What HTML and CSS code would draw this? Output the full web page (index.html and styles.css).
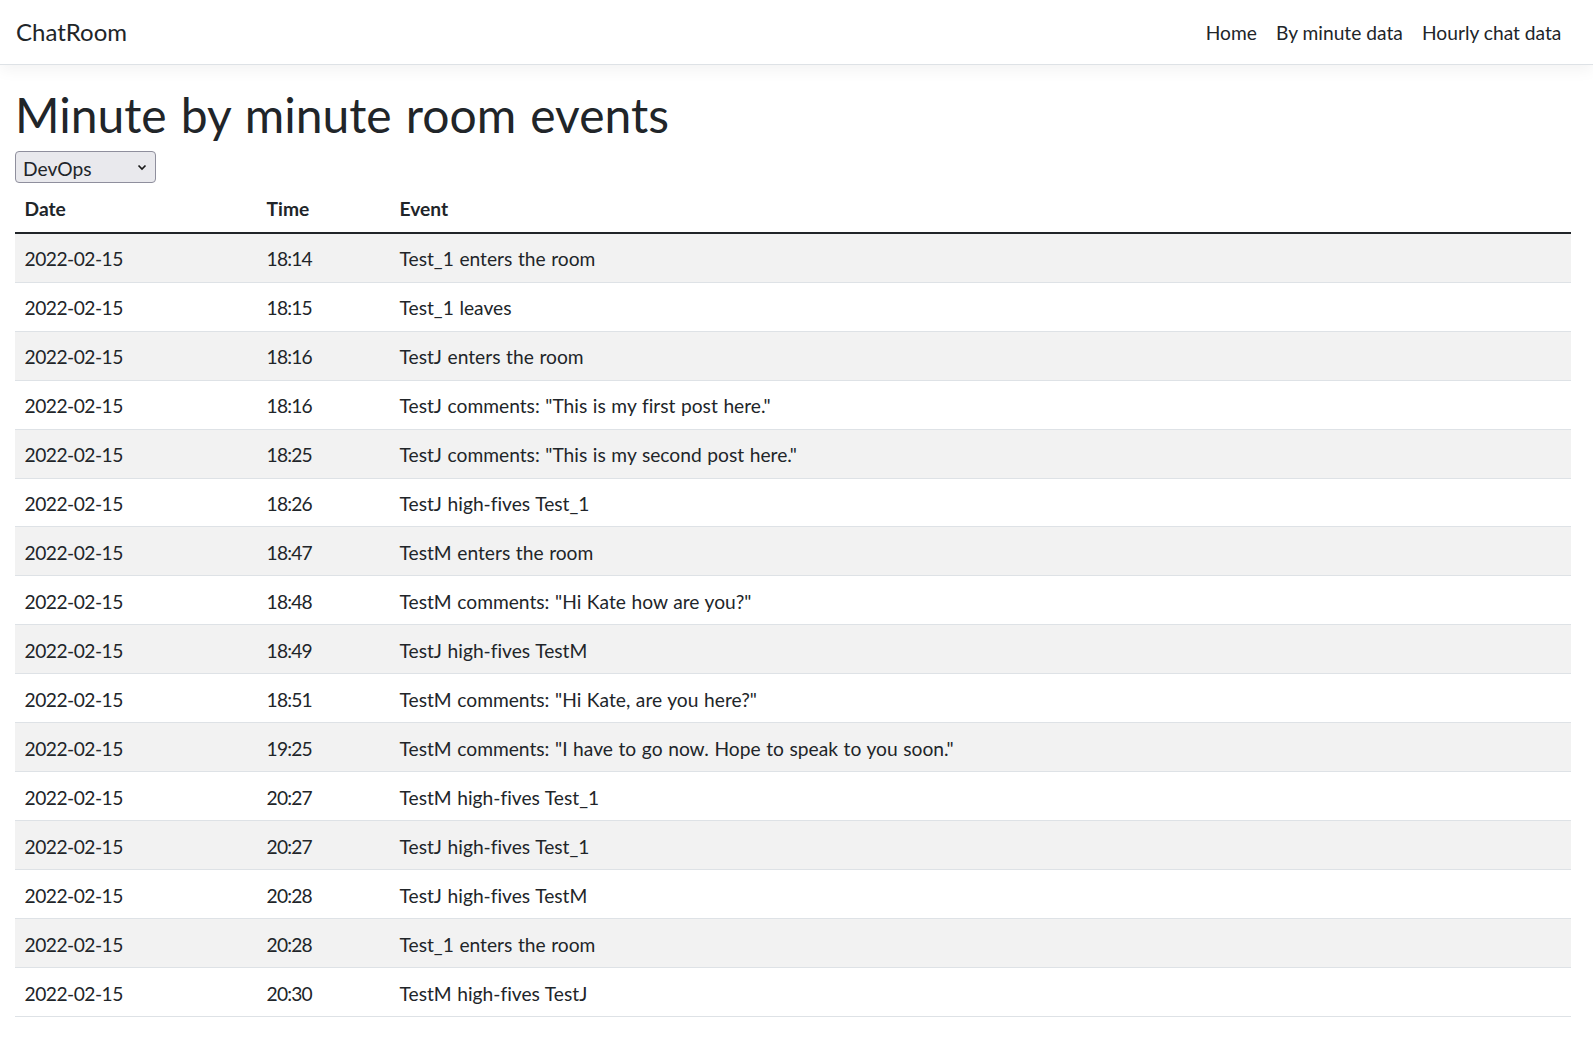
FILE: index.html
```html
<!DOCTYPE html>
<html lang="en">
<head>
<meta charset="utf-8">
<title>Minute by minute room events - ChatRoom</title>
<link rel="stylesheet" href="styles.css">
</head>
<body>
<header class="navbar">
  <a class="brand" href="#">ChatRoom</a>
  <nav class="nav">
    <a class="nav-link" href="#">Home</a>
    <a class="nav-link" href="#">By minute data</a>
    <a class="nav-link" href="#">Hourly chat data</a>
  </nav>
</header>
<main class="main">
  <h1 class="title">Minute by minute room events</h1>
  <div class="picker">
    <div class="select">
      <span class="select-value">DevOps</span>
      <svg class="chevron" width="10" height="7" viewBox="0 0 10 7"><path d="M1.5 1.5 L5 5 L8.5 1.5" fill="none" stroke="#1a1a1a" stroke-width="1.7"/></svg>
    </div>
  </div>
  <table class="events">
    <thead>
      <tr><th class="c-date">Date</th><th class="c-time">Time</th><th>Event</th></tr>
    </thead>
    <tbody>
      <tr><td class="d">2022-02-15</td><td class="t">18:14</td><td class="e">Test_1 enters the room</td></tr>
      <tr><td class="d">2022-02-15</td><td class="t">18:15</td><td class="e">Test_1 leaves</td></tr>
      <tr><td class="d">2022-02-15</td><td class="t">18:16</td><td class="e">TestJ enters the room</td></tr>
      <tr><td class="d">2022-02-15</td><td class="t">18:16</td><td class="e">TestJ comments: "This is my first post here."</td></tr>
      <tr><td class="d">2022-02-15</td><td class="t">18:25</td><td class="e">TestJ comments: "This is my second post here."</td></tr>
      <tr><td class="d">2022-02-15</td><td class="t">18:26</td><td class="e">TestJ high-fives Test_1</td></tr>
      <tr><td class="d">2022-02-15</td><td class="t">18:47</td><td class="e">TestM enters the room</td></tr>
      <tr><td class="d">2022-02-15</td><td class="t">18:48</td><td class="e">TestM comments: "Hi Kate how are you?"</td></tr>
      <tr><td class="d">2022-02-15</td><td class="t">18:49</td><td class="e">TestJ high-fives TestM</td></tr>
      <tr><td class="d">2022-02-15</td><td class="t">18:51</td><td class="e">TestM comments: "Hi Kate, are you here?"</td></tr>
      <tr><td class="d">2022-02-15</td><td class="t">19:25</td><td class="e">TestM comments: "I have to go now. Hope to speak to you soon."</td></tr>
      <tr><td class="d">2022-02-15</td><td class="t">20:27</td><td class="e">TestM high-fives Test_1</td></tr>
      <tr><td class="d">2022-02-15</td><td class="t">20:27</td><td class="e">TestJ high-fives Test_1</td></tr>
      <tr><td class="d">2022-02-15</td><td class="t">20:28</td><td class="e">TestJ high-fives TestM</td></tr>
      <tr><td class="d">2022-02-15</td><td class="t">20:28</td><td class="e">Test_1 enters the room</td></tr>
      <tr><td class="d">2022-02-15</td><td class="t">20:30</td><td class="e">TestM high-fives TestJ</td></tr>
    </tbody>
  </table>
</main>
</body>
</html>
```
FILE: styles.css
```css
html, body {
  margin: 0;
  padding: 0;
  background: #ffffff;
}
body {
  font-family: Lato, "Noto Sans", sans-serif;
  font-size: 19.2px;
  line-height: 28.8px;
  color: #212529;
  font-variant-ligatures: none;
}
a {
  color: #212529;
  text-decoration: none;
}
.navbar {
  height: 64px;
  border-bottom: 1px solid #dee2e6;
  box-shadow: 0 4.8px 14.4px rgba(0, 0, 0, 0.05);
  display: flex;
  align-items: center;
  justify-content: space-between;
  padding: 0 22px 0 15px;
  margin-bottom: 18px;
}
.brand {
  font-size: 24px;
  line-height: 36px;
  padding-left: 1px;
}
.nav {
  display: flex;
  padding-top: 3px;
}
.nav-link {
  padding: 0 9.6px;
  font-size: 19.2px;
}
.main {
  padding: 0 22px 0 15px;
}
.title {
  font-size: 48px;
  line-height: 57.6px;
  font-weight: 400;
  word-spacing: 1.8px;
  padding-top: 3px;
  margin: 0 0 7px;
}
.picker {
  height: 33px;
}
.select {
  box-sizing: border-box;
  width: 141px;
  height: 32px;
  background: #e9e9ed;
  border: 1px solid #8f8f9d;
  border-radius: 4px;
  display: flex;
  align-items: center;
  justify-content: space-between;
  padding: 4px 8px 0 7px;
}
.chevron {
  margin-top: -3px;
}
.select-value {
  font-size: 19.2px;
  line-height: 28px;
}
.events {
  width: 100%;
  border-collapse: collapse;
  margin-top: 0;
}
.events th, .events td {
  text-align: left;
  padding: 11.6px 9.6px 7.6px;
  line-height: 28.8px;
  vertical-align: top;
}
.events th {
  font-weight: 700;
  border-bottom: 2px solid #212529;
}
.events td {
  border-bottom: 1px solid #dee2e6;
}
.events td.d {
  letter-spacing: -0.5px;
}
.events td.t {
  letter-spacing: -0.8px;
}
.events td.e {
  word-spacing: 0.7px;
}
.c-date {
  width: 222.8px;
}
.c-time {
  width: 113.8px;
}
.events tbody tr:nth-child(odd) td {
  background: #f2f2f2;
}
```
